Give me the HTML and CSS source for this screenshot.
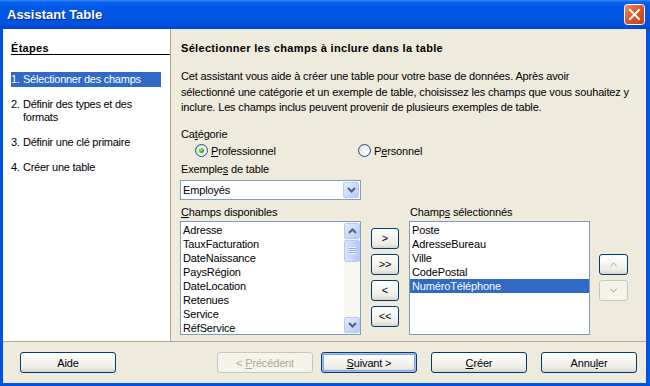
FILE: index.html
```html
<!DOCTYPE html>
<html lang="fr">
<head>
    <meta charset="UTF-8">
    <title>Assistant Table</title>
    <link rel="stylesheet" href="styles.css">
</head>
<body>
    <div class="window">
        <div class="titlebar">
            <span class="title">Assistant Table</span>
            <span class="close">
                <svg width="21" height="21" viewBox="0 0 21 21">
                    <defs>
                        <linearGradient id="closeFill" x1="0" y1="0" x2="1" y2="1">
                            <stop offset="0" stop-color="#F08E6E"/>
                            <stop offset="0.45" stop-color="#E0582F"/>
                            <stop offset="1" stop-color="#C2391A"/>
                        </linearGradient>
                    </defs>
                    <rect x="0.5" y="0.5" width="20" height="20" rx="3" fill="url(#closeFill)" stroke="#fff"/>
                    <path d="M6 6 L15 15 M15 6 L6 15" stroke="#fff" stroke-width="2" stroke-linecap="square"/>
                </svg>
            </span>
        </div>
        <div class="client">
            <div class="content">
                <div class="steps">
                    <div class="steps-title">Étapes</div>
                    <ul class="step-list">
                        <li class="step active"><span class="num">1.</span><span>Sélectionner des champs</span></li>
                        <li class="step"><span class="num">2.</span><span>Définir des types et des formats</span></li>
                        <li class="step"><span class="num">3.</span><span>Définir une clé primaire</span></li>
                        <li class="step"><span class="num">4.</span><span>Créer une table</span></li>
                    </ul>
                </div>
                <div class="page">
                    <h1 class="page-title">Sélectionner les champs à inclure dans la table</h1>
                    <p class="intro">Cet assistant vous aide à créer une table pour votre base de données. Après avoir<br>sélectionné une catégorie et un exemple de table, choisissez les champs que vous souhaitez y<br>inclure. Les champs inclus peuvent provenir de plusieurs exemples de table.</p>

                    <div class="label label-cat">Ca<u>t</u>égorie</div>
                    <div class="radios">
                        <div class="radio checked"><span class="dot"></span><span><u>P</u>rofessionnel</span></div>
                        <div class="radio"><span class="dot"></span><span>P<u>e</u>rsonnel</span></div>
                    </div>

                    <div class="label label-ex">Exemple<u>s</u> de table</div>
                    <div class="select">
                        <span class="select-value">Employés</span>
                        <span class="sb-btn">
                            <svg width="9" height="6" viewBox="0 0 9 6"><path d="M1 1 L4.5 4.5 L8 1" fill="none" stroke="#4D6185" stroke-width="2"/></svg>
                        </span>
                    </div>

                    <div class="fields">
                        <div class="col">
                            <div class="col-label"><u>C</u>hamps disponibles</div>
                            <div class="listbox">
                                <div class="items">
                                    <div class="item">Adresse</div>
                                    <div class="item">TauxFacturation</div>
                                    <div class="item">DateNaissance</div>
                                    <div class="item">PaysRégion</div>
                                    <div class="item">DateLocation</div>
                                    <div class="item">Retenues</div>
                                    <div class="item">Service</div>
                                    <div class="item">RéfService</div>
                                </div>
                                <div class="scrollbar">
                                    <span class="sb-btn">
                                        <svg width="9" height="6" viewBox="0 0 9 6"><path d="M1 5 L4.5 1.5 L8 5" fill="none" stroke="#4D6185" stroke-width="2"/></svg>
                                    </span>
                                    <span class="sb-thumb">
                                        <span class="grip"></span>
                                    </span>
                                    <span class="sb-track"></span>
                                    <span class="sb-btn">
                                        <svg width="9" height="6" viewBox="0 0 9 6"><path d="M1 1 L4.5 4.5 L8 1" fill="none" stroke="#4D6185" stroke-width="2"/></svg>
                                    </span>
                                </div>
                            </div>
                        </div>
                        <div class="moves">
                            <button class="btn small"><span>&gt;</span></button>
                            <button class="btn small"><span>&gt;&gt;</span></button>
                            <button class="btn small"><span>&lt;</span></button>
                            <button class="btn small"><span>&lt;&lt;</span></button>
                        </div>
                        <div class="col">
                            <div class="col-label">Champ<u>s</u> sélectionnés</div>
                            <div class="listbox">
                                <div class="items">
                                    <div class="item">Poste</div>
                                    <div class="item">AdresseBureau</div>
                                    <div class="item">Ville</div>
                                    <div class="item">CodePostal</div>
                                    <div class="item selected">NuméroTéléphone</div>
                                </div>
                            </div>
                        </div>
                        <div class="orders">
                            <button class="btn small">
                                <svg width="7" height="5" viewBox="0 0 7 5"><path d="M0.5 4.5 L3.5 0.8 L6.5 4.5" fill="none" stroke="#ACA899" stroke-width="1"/></svg>
                            </button>
                            <button class="btn small disabled">
                                <svg width="7" height="5" viewBox="0 0 7 5"><path d="M0.5 0.5 L3.5 4.2 L6.5 0.5" fill="none" stroke="#ACA899" stroke-width="1"/></svg>
                            </button>
                        </div>
                    </div>
                </div>
            </div>
            <div class="footer">
                <button class="btn wide"><span>Aide</span></button>
                <div class="nav">
                    <button class="btn wide disabled"><span>&lt; <u>P</u>récédent</span></button>
                    <button class="btn wide default"><span><u>S</u>uivant &gt;</span></button>
                    <button class="btn wide gap"><span><u>C</u>réer</span></button>
                    <button class="btn wide gap"><span>Annu<u>l</u>er</span></button>
                </div>
            </div>
        </div>
    </div>
</body>
</html>
```
FILE: styles.css
```css
body {
    margin: 0;
    background: #ffffff;
    font-family: "Liberation Sans", Arial, sans-serif;
    font-size: 11px;
    letter-spacing: -0.15px;
    color: #000;
}
.window {
    width: 650px;
    height: 386px;
    display: flex;
    flex-direction: column;
    background: #0052E0;
}
.titlebar {
    height: 29px;
    flex: none;
    display: flex;
    align-items: center;
    justify-content: space-between;
    padding: 0 5px 0 7px;
    background: linear-gradient(#3D8DF7 0, #0B62EC 2px, #0058E6 7px, #0056E5 60%, #004ED9 88%, #0044CC 100%);
}
.title {
    color: #fff;
    font-weight: bold;
    font-size: 13px;
    letter-spacing: 0;
    text-shadow: 1px 1px 0 #0A2A8C;
}
.close {
    width: 21px;
    height: 21px;
    display: block;
}
.client {
    flex: 1;
    margin: 0 4px 3px 3px;
    background: #EEEADC;
    display: flex;
    flex-direction: column;
}
.content {
    height: 312px;
    display: flex;
    border-bottom: 1px solid #ACA899;
}

/* left panel */
.steps {
    width: 167px;
    background: #fff;
    border-right: 1px solid #ACA899;
    padding-top: 13px;
}
.steps-title {
    font-weight: bold;
    letter-spacing: 0.3px;
    line-height: 12px;
    margin-left: 8px;
    border-bottom: 1px solid #000;
}
.step-list {
    list-style: none;
    margin: 17px 9px 0 8px;
    padding: 0;
}
.step {
    display: flex;
    line-height: 13px;
    padding: 1px 0;
    margin-bottom: 10px;
    letter-spacing: -0.25px;
}
.step .num {
    width: 12px;
    flex: none;
}
.step.active {
    background: #316AC5;
    color: #fff;
}

/* right panel */
.page {
    flex: 1;
    padding: 13px 0 0 9px;
}
.page-title {
    font-size: 11px;
    font-weight: bold;
    letter-spacing: 0.32px;
    line-height: 13px;
    margin: 0 0 14px 1px;
}
.intro {
    margin: 0 0 0 1px;
    line-height: 15.5px;
    white-space: nowrap;
}
.label {
    line-height: 13px;
    margin-left: 1px;
}
.label-cat {
    margin-top: 12px;
}
.label-ex {
    margin-top: 4px;
}
.radios {
    display: grid;
    grid-template-columns: 163px auto;
    height: 16px;
    margin-top: 2px;
    padding-left: 15px;
    align-items: center;
}
.radio {
    display: flex;
    align-items: center;
    gap: 3px;
}
.dot {
    width: 13px;
    height: 13px;
    box-sizing: border-box;
    border: 1px solid #1C5180;
    border-radius: 50%;
    background: radial-gradient(circle at 65% 65%, #ffffff 0, #F2F1EC 45%, #D5D3C9 100%);
    position: relative;
}
.radio.checked .dot::after {
    content: "";
    position: absolute;
    left: 3px;
    top: 3px;
    width: 5px;
    height: 5px;
    border-radius: 50%;
    background: radial-gradient(circle at 35% 35%, #9CE79C 0, #2FB52F 50%, #1B8C1B 100%);
}
.select {
    margin-top: 4px;
    width: 181px;
    height: 20px;
    box-sizing: border-box;
    border: 1px solid #7F9DB9;
    background: #fff;
    display: flex;
    align-items: center;
    justify-content: space-between;
    padding: 0 1px 0 2px;
}
.sb-btn {
    width: 16px;
    height: 16px;
    box-sizing: border-box;
    border: 1px solid #B7C9F4;
    border-radius: 2px;
    background: linear-gradient(135deg, #E3ECFE 0, #C8D8FB 60%, #B6CBF7 100%);
    display: flex;
    align-items: center;
    justify-content: center;
    flex: none;
}
.fields {
    display: flex;
    margin-top: 6px;
}
.col {
    width: 181px;
}
.col-label {
    line-height: 13px;
    margin-left: 1px;
}
.listbox {
    margin-top: 2px;
    height: 114px;
    box-sizing: border-box;
    border: 1px solid #7F9DB9;
    background: #fff;
    display: flex;
    overflow: hidden;
}
.items {
    flex: 1;
    padding-top: 1px;
}
.item {
    height: 14px;
    line-height: 14px;
    padding-left: 2px;
    white-space: nowrap;
}
.item.selected {
    background: #316AC5;
    color: #fff;
}
.scrollbar {
    width: 16px;
    padding: 1px 0 1px 0;
    display: flex;
    flex-direction: column;
    background: #F7F6F1;
}
.sb-thumb {
    height: 22px;
    margin-top: 1px;
    box-sizing: border-box;
    border: 1px solid #B7C9F4;
    border-radius: 2px;
    background: linear-gradient(90deg, #D7E3FD 0, #C4D5FB 60%, #B4C8F6 100%);
    display: flex;
    align-items: center;
    justify-content: center;
}
.grip {
    width: 7px;
    height: 7px;
    background: repeating-linear-gradient(#EEF3FE 0, #EEF3FE 1px, #8CA7E4 1px, #8CA7E4 2px);
}
.sb-track {
    flex: 1;
}
.moves {
    display: flex;
    flex-direction: column;
    gap: 5px;
    width: 28px;
    margin-left: 10px;
    margin-right: 10px;
    padding-top: 22px;
}
.orders {
    display: flex;
    flex-direction: column;
    gap: 5px;
    width: 29px;
    margin-left: 9px;
    padding-top: 48px;
}

/* buttons */
.btn {
    box-sizing: border-box;
    height: 21px;
    padding: 0;
    border: 1px solid #003C74;
    border-radius: 3px;
    background: linear-gradient(#FFFFFF 0, #F7F7F3 40%, #EDEBE4 80%, #D8D3C8 100%);
    font-family: "Liberation Sans", Arial, sans-serif;
    font-size: 11px;
    letter-spacing: -0.15px;
    color: #000;
    display: flex;
    align-items: center;
    justify-content: center;
}
.btn.small {
    width: 100%;
}
.btn.disabled {
    border-color: #C9C7BA;
    background: #F5F4EA;
    color: #ACA899;
}
.btn.default {
    box-shadow: inset 0 0 0 1px #A9C3F0, inset 0 0 0 2px #7EA2E4;
}
.footer {
    flex: 1;
    display: flex;
    justify-content: space-between;
    padding: 10px 9px 0 17px;
}
.btn.wide {
    width: 96px;
}
.nav {
    display: flex;
    gap: 8px;
}
.nav .gap {
    margin-left: 6px;
}
```
